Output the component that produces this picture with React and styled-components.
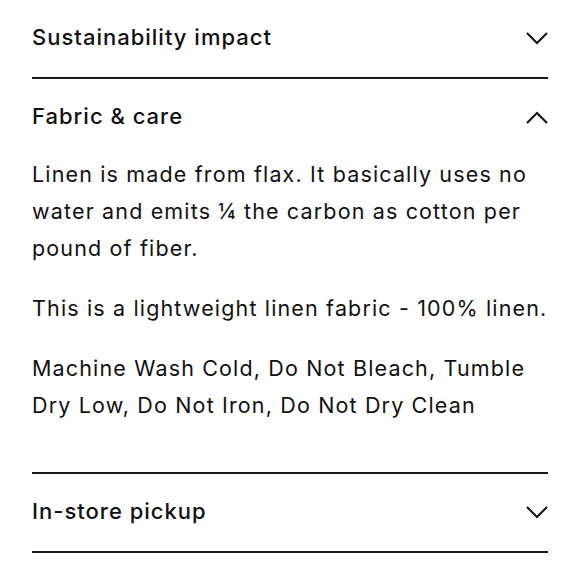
import React from 'react'
import styled, { createGlobalStyle } from 'styled-components'

const GlobalStyle = createGlobalStyle`
  html, body {
    margin: 0;
    padding: 0;
    background: #ffffff;
  }
  body {
    font-family: Inter, "Liberation Sans", Arial, sans-serif;
    color: #111111;
  }
`

const Wrapper = styled.div`
  padding: 0 32px;
  border-top: 1px solid #777;
  margin-top: -1px;
`

const Item = styled.section`
  border-bottom: 2px solid #1a1a1a;
`

const Header = styled.div`
  height: 77px;
  box-sizing: border-box;
  padding-bottom: 3px;
  display: flex;
  align-items: center;
  justify-content: space-between;
`

const Title = styled.h2`
  margin: 0;
  font-size: 22px;
  font-weight: 500;
  letter-spacing: 1px;
`

const Icon = styled.svg`
  margin-top: 3px;
  flex-shrink: 0;
`

const Body = styled.div`
  padding-bottom: 48px;
`

const Paragraph = styled.p`
  margin: 0 0 23px 0;
  font-size: 21.5px;
  font-weight: 400;
  line-height: 37px;
  letter-spacing: 1.15px;
  &:last-child {
    margin-bottom: 0;
  }
`

const Chevron = ({ up }) => (
  <Icon width="22" height="13" viewBox="0 0 22 13" fill="none">
    <polyline
      points={up ? '1,12 11,2 21,12' : '1,1 11,11 21,1'}
      stroke="#111"
      strokeWidth="2"
      strokeLinejoin="miter"
    />
  </Icon>
)

const sections = [
  { title: 'Sustainability impact', open: false },
  {
    title: 'Fabric & care',
    open: true,
    body: [
      'Linen is made from flax. It basically uses no water and emits ¼ the carbon as cotton per pound of fiber.',
      'This is a lightweight linen fabric - 100% linen.',
      'Machine Wash Cold, Do Not Bleach, Tumble Dry Low, Do Not Iron, Do Not Dry Clean',
    ],
  },
  { title: 'In-store pickup', open: false },
]

const App = () => {
  return (
    <>
      <GlobalStyle />
      <Wrapper>
        {sections.map((s) => (
          <Item key={s.title}>
            <Header>
              <Title>{s.title}</Title>
              <Chevron up={s.open} />
            </Header>
            {s.open && (
              <Body>
                {s.body.map((t) => (
                  <Paragraph key={t}>{t}</Paragraph>
                ))}
              </Body>
            )}
          </Item>
        ))}
      </Wrapper>
    </>
  )
}

export default App
